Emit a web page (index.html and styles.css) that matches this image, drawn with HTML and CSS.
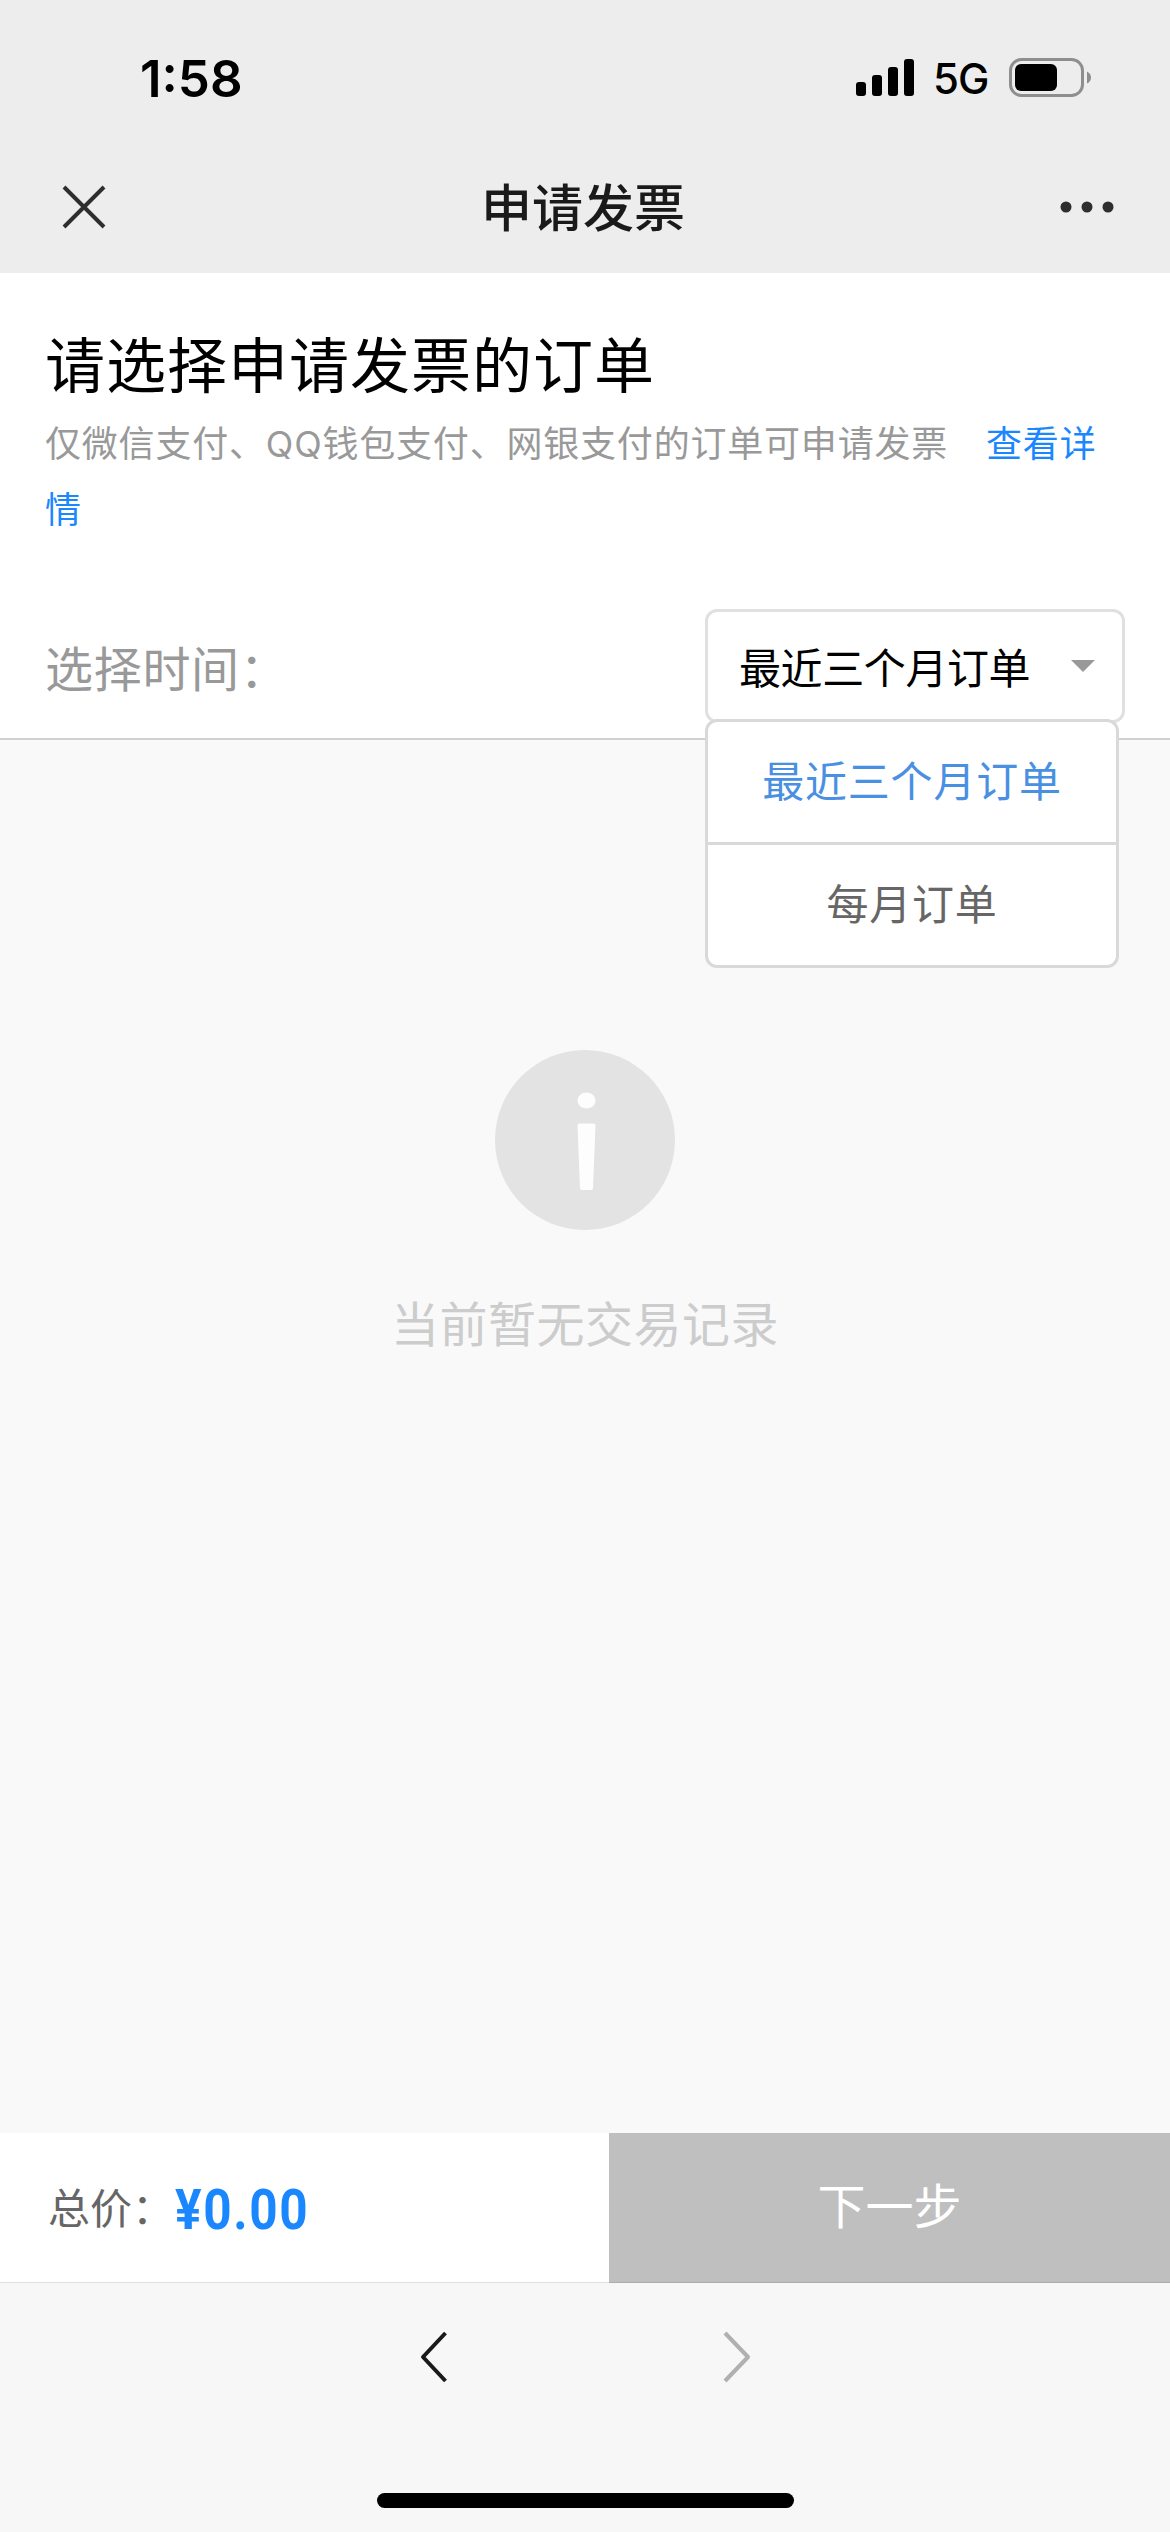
FILE: index.html
```html
<!DOCTYPE html>
<html lang="zh-CN">
<head>
  <meta charset="UTF-8">
  <meta name="viewport" content="width=device-width, initial-scale=1.0">
  <title>申请发票</title>
  <link rel="stylesheet" href="styles.css">
</head>
<body>

<!-- 状态栏 -->
<div class="status-bar">
  <span class="time">1:58</span>
  <div class="status-icons">
    <svg class="signal" width="58" height="38" viewBox="0 0 58 38">
      <rect x="0" y="23" width="10" height="14" rx="3"/>
      <rect x="16" y="16" width="10" height="21" rx="3"/>
      <rect x="32" y="8" width="10" height="29" rx="3"/>
      <rect x="48" y="0" width="10" height="37" rx="3"/>
    </svg>
    <span class="network">5G</span>
    <svg class="battery" width="82" height="39" viewBox="0 0 82 39">
      <rect x="1.5" y="1.5" width="72" height="36" rx="11" fill="none" stroke="#8e8e8e" stroke-width="3"/>
      <rect x="6" y="6" width="42" height="27" rx="6"/>
      <path d="M78 13.5 Q82 15.500 82 19.500 Q82 23.500 78 25.500 Z" fill="#8e8e8e"/>
    </svg>
  </div>
</div>

<!-- 导航栏 -->
<div class="nav-bar">
  <svg class="close" width="44" height="44" viewBox="0 0 44 44">
    <path d="M2 2 L42 42 M42 2 L2 42" stroke="#2e2e2e" stroke-width="4" fill="none"/>
  </svg>
  <h1>申请发票</h1>
  <svg class="more" width="54" height="12" viewBox="0 0 54 12" fill="#2e2e2e">
    <circle cx="6" cy="6" r="5.500"/>
    <circle cx="27" cy="6" r="5.500"/>
    <circle cx="48" cy="6" r="5.500"/>
  </svg>
</div>

<!-- 订单选择 -->
<div class="panel">
  <h2>请选择申请发票的订单</h2>
  <p class="tips">仅微信支付、QQ钱包支付、网银支付的订单可申请发票<a class="detail">查看详情</a></p>
  <div class="filter">
    <span class="label">选择时间：</span>
    <div class="select">
      <span>最近三个月订单</span>
      <i class="arrow"></i>
      <ul class="menu">
        <li class="active">最近三个月订单</li>
        <li>每月订单</li>
      </ul>
    </div>
  </div>
</div>

<!-- 空状态 -->
<div class="empty">
  <svg width="180" height="180" viewBox="0 0 180 180">
    <circle cx="90" cy="90" r="90" fill="#e3e3e3"/>
    <ellipse cx="91.500" cy="50.500" rx="9" ry="8" fill="#fdfdfd"/>
    <path d="M84.500 73.500 H98.500 Q100.500 73.500 100.500 75.500 L98 138 Q98 140 96 140 H87 Q85 140 85 138 L82.500 75.500 Q82.500 73.500 84.500 73.500 Z" fill="#fdfdfd"/>
  </svg>
  <p>当前暂无交易记录</p>
</div>

<!-- 结算栏 -->
<div class="footer">
  <div class="sum">
    <span class="sum-label">总价：</span>
    <span class="price">¥0.00</span>
  </div>
  <div class="next">下一步</div>
</div>

<!-- 底部工具栏 -->
<div class="toolbar">
  <div class="arrows">
    <svg width="28" height="52" viewBox="0 0 28 52">
      <path d="M25.500 2 L3 26 L25.500 50" fill="none" stroke="#1a1a1a" stroke-width="4" stroke-linejoin="round"/>
    </svg>
    <svg width="28" height="52" viewBox="0 0 28 52">
      <path d="M2 2 L25 26 L2 50" fill="none" stroke="#b0b0b0" stroke-width="4" stroke-linejoin="round"/>
    </svg>
  </div>
  <div class="home"></div>
</div>

</body>
</html>
```

FILE: styles.css
```css
* { box-sizing: border-box; margin: 0; padding: 0; }
body {
  width: 1170px;
  height: 2532px;
  display: flex;
  flex-direction: column;
  overflow: hidden;
  background: #f9f9f9;
  font-family: Inter, "Noto Sans CJK SC", sans-serif;
  font-weight: 400;
}
svg { display: block; }

/* 状态栏 */
.status-bar {
  height: 141px;
  padding: 58px 79px 0 140px;
  display: flex;
  justify-content: space-between;
  align-items: flex-start;
  background: #ededed;
}
.time { font-size: 51px; font-weight: 600; line-height: 41px; }
.status-icons { display: flex; align-items: flex-start; }
.signal { margin-top: 1px; }
.network { width: 95px; padding-left: 19px; font-size: 42px; font-weight: 500; line-height: 42px; letter-spacing: -1px; }

/* 导航栏 */
.nav-bar {
  height: 132px;
  padding: 0 56px 0 62px;
  display: flex;
  justify-content: space-between;
  align-items: center;
  background: #ededed;
}
.nav-bar h1 { padding-bottom: 5px; font-size: 51px; font-weight: 500; color: #1a1a1a; }

/* 订单选择 */
.panel { height: 467px; padding: 60px 45px 0; background: #fff; border-bottom: 2px solid #d0d0d0; }
.panel h2 { font-size: 60px; font-weight: 400; line-height: 66px; letter-spacing: 1px; }
.tips { margin-top: 12px; font-size: 36px; line-height: 66px; letter-spacing: 0.8px; color: #999; }
.detail { margin-left: 38px; color: #1a87ff; }
.filter { height: 113px; margin-top: 66px; display: flex; justify-content: space-between; align-items: center; }
.label { font-size: 48px; letter-spacing: 0.7px; color: #999; }

.select {
  width: 420px;
  height: 114px;
  padding: 0 27px 0 31px;
  position: relative;
  display: flex;
  justify-content: space-between;
  align-items: center;
  border: 3px solid #e0e0e0;
  border-radius: 12px;
  font-size: 42px;
}
.select > span { letter-spacing: -0.4px; }
.arrow { border: 12.500px solid transparent; border-top-color: #999; border-bottom: 0; }

.menu {
  position: absolute;
  top: 107px;
  left: -3px;
  width: 414px;
  list-style: none;
  background: #fff;
  border: 3px solid #d9d9d9;
  border-radius: 12px;
}
.menu li { height: 120px; line-height: 120px; text-align: center; letter-spacing: 0.8px; color: #666; }
.menu li.active { height: 123px; color: #4a90e2; border-bottom: 3px solid #d9d9d9; }

/* 空状态 */
.empty { flex: 1; padding-top: 310px; display: flex; flex-direction: column; align-items: center; }
.empty p { margin-top: 60px; font-size: 48px; line-height: 70px; letter-spacing: 0.5px; color: #ccc; }

/* 结算栏 */
.footer { height: 150px; display: flex; border-bottom: 1px solid #dfdfdf; background: #fff; }
.sum { width: 609px; padding-left: 48px; display: flex; align-items: center; }
.sum-label { width: 127px; padding-bottom: 4px; font-size: 42px; color: #666; }
.price {
  padding-top: 5px;
  font-family: Roboto, sans-serif;
  font-size: 55px;
  font-weight: 700;
  letter-spacing: 1.8px;
  color: #1a87ff;
  transform: scaleX(0.9);
  transform-origin: left;
}
.next { flex: 1; height: 150px; line-height: 148px; text-align: center; font-size: 48px; color: #fff; background: #bfbfbf; border-bottom: 1px solid #acacac; }

/* 底部工具栏 */
.toolbar { height: 249px; padding-top: 48px; background: #f7f7f7; }
.arrows { display: flex; justify-content: center; gap: 275px; }
.home { width: 417px; height: 15px; margin: 110px auto 0; border-radius: 8px; background: #000; }
```
